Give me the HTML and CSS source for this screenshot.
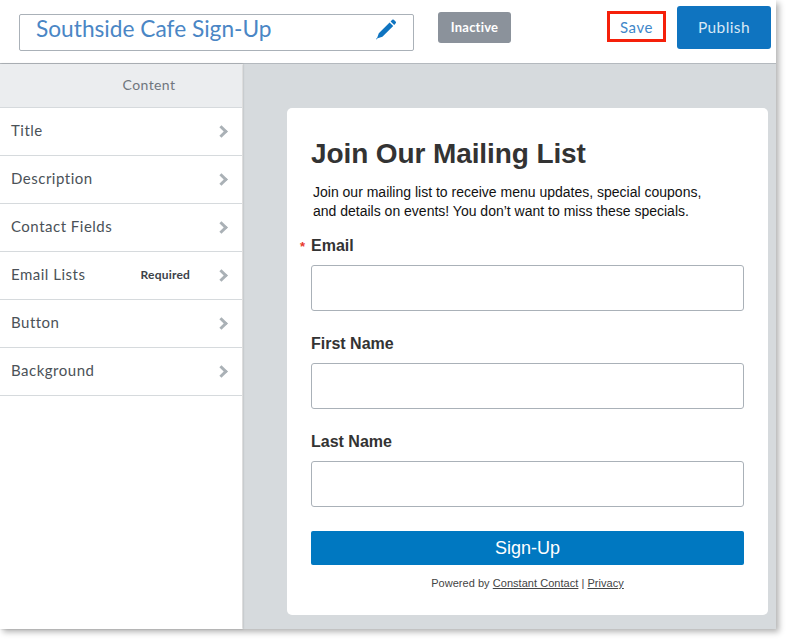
FILE: index.html
```html
<!DOCTYPE html>
<html lang="en">

<head>
    <meta charset="UTF-8">
    <title>Southside Cafe Sign-Up</title>
    <link rel="stylesheet" href="styles.css">
</head>

<body>
    <div class="window">
        <header class="topbar">
            <div class="name-box">
                <span class="name-text">Southside Cafe Sign-Up</span>
                <svg class="pencil" width="22" height="22" viewBox="0 0 22 22">
                    <path d="M14.6 4.4 L18.2 8 L7.4 18.8 L2.6 20.2 L1.4 21.4 L1 21 L2.2 19.8 L3.8 15.2 Z" fill="#0f74c0"/>
                    <path d="M15.6 3.4 L17.2 1.8 Q18 1 18.8 1.8 L20.8 3.8 Q21.4 4.6 20.7 5.3 L19.2 7 Z" fill="#0f74c0"/>
                </svg>
            </div>
            <span class="badge">Inactive</span>
            <a class="save-btn">Save</a>
            <a class="publish-btn">Publish</a>
        </header>

        <div class="main">
            <aside class="sidebar">
                <div class="sidebar-head">Content</div>
                <div class="side-item"><span>Title</span><span class="chevron"></span></div>
                <div class="side-item"><span>Description</span><span class="chevron"></span></div>
                <div class="side-item"><span>Contact Fields</span><span class="chevron"></span></div>
                <div class="side-item"><span>Email Lists</span><span class="req">Required</span><span class="chevron"></span></div>
                <div class="side-item"><span>Button</span><span class="chevron"></span></div>
                <div class="side-item"><span>Background</span><span class="chevron"></span></div>
            </aside>

            <section class="canvas">
                <form class="card">
                    <h1>Join Our Mailing List</h1>
                    <p class="intro">Join our mailing list to receive menu updates, special coupons,<br>and details on events! You don’t want to miss these specials.</p>

                    <label class="field-label"><span class="star">*</span>Email</label>
                    <input class="field" type="text">

                    <label class="field-label">First Name</label>
                    <input class="field" type="text">

                    <label class="field-label">Last Name</label>
                    <input class="field" type="text">

                    <button class="signup" type="button">Sign-Up</button>
                    <p class="powered">Powered by <u>Constant Contact</u> | <u>Privacy</u></p>
                </form>
            </section>
        </div>
    </div>
</body>

</html>
```

FILE: styles.css
```css
html,
body {
    margin: 0;
    padding: 0;
    background: #fff;
}

body {
    width: 786px;
    height: 639px;
    overflow: hidden;
    font-family: "Lato", "Open Sans", sans-serif;
}

.window {
    width: 776px;
    height: 629px;
    display: flex;
    flex-direction: column;
    background: #fff;
    box-shadow: 3px 3px 6px rgba(0, 0, 0, 0.3);
}

.topbar {
    height: 63px;
    display: flex;
    align-items: flex-start;
    border-bottom: 1px solid #b4b9be;
    box-sizing: content-box;
}

.name-box {
    width: 361px;
    height: 27px;
    margin: 14px 0 0 19px;
    padding: 0 16px 8px 16px;
    box-sizing: content-box;
    display: flex;
    align-items: center;
    justify-content: space-between;
    border: 1px solid #aab1b8;
    border-radius: 2px;
}

.name-text {
    font-size: 22.7px;
    color: #4a86c5;
}

.pencil {
    flex: none;
}

.badge {
    width: 73px;
    height: 30px;
    padding-bottom: 1px;
    margin: 12px 0 0 24px;
    display: flex;
    align-items: center;
    justify-content: center;
    background: #8b929b;
    border-radius: 3px;
    color: #fff;
    font-size: 13px;
    font-weight: 700;
    letter-spacing: 0.2px;
}

.save-btn {
    width: 53px;
    height: 25px;
    margin: 11px 0 0 96px;
    display: flex;
    align-items: center;
    justify-content: center;
    border: 3px solid #f5200a;
    color: #3f87c9;
    font-size: 15px;
    letter-spacing: 0.6px;
}

.publish-btn {
    width: 94px;
    height: 41px;
    padding-bottom: 2px;
    margin: 6px 0 0 11px;
    display: flex;
    align-items: center;
    justify-content: center;
    background: #0f74c0;
    border-radius: 3px;
    color: #d8e8f5;
    font-size: 15.5px;
    letter-spacing: 0.4px;
}

.main {
    flex: 1;
    display: flex;
    min-height: 0;
}

.sidebar {
    width: 242px;
    flex: none;
    background: #fff;
    box-shadow: 1px 0 2px rgba(0, 0, 0, 0.2);
    position: relative;
}

.sidebar-head {
    height: 44px;
    padding: 0 0 2px 56px;
    display: flex;
    align-items: center;
    justify-content: center;
    box-sizing: border-box;
    background: #ebedef;
    border-bottom: 1px solid #d6dadd;
    color: #6f767d;
    font-size: 14px;
    letter-spacing: 0.4px;
}

.side-item {
    height: 48px;
    box-sizing: border-box;
    display: flex;
    align-items: center;
    padding: 0 15px 3px 11px;
    border-bottom: 1px solid #d6dadd;
    color: #4b5258;
    font-size: 15px;
    letter-spacing: 0.5px;
}

.req {
    margin-left: auto;
    margin-right: 27px;
    font-size: 12px;
    font-weight: 700;
    letter-spacing: 0.2px;
    color: #3c4248;
}

.chevron {
    width: 9px;
    height: 9px;
    margin-left: auto;
    margin-top: 2px;
    margin-right: 1px;
    box-sizing: border-box;
    border-top: 3px solid #aab1b6;
    border-right: 3px solid #aab1b6;
    transform: rotate(45deg);
}

.req + .chevron {
    margin-left: 0;
}

.canvas {
    flex: 1;
    background: #d6dadd;
    padding: 44px 8px 0 44px;
    box-sizing: border-box;
    margin-left: 1px;
}

.card {
    height: 507px;
    box-sizing: border-box;
    padding: 29px 24px 0;
    background: #fff;
    border-radius: 5px;
    font-family: "Liberation Sans", Arial, sans-serif;
}

.card h1 {
    margin: 0;
    font-size: 28px;
    line-height: 34px;
    font-weight: 700;
    letter-spacing: -0.1px;
    color: #333;
}

.intro {
    margin: 12px 0 0 2px;
    font-size: 14px;
    line-height: 19px;
    color: #111;
}

.field-label {
    display: block;
    position: relative;
    margin-top: 15px;
    font-size: 16px;
    line-height: 20px;
    font-weight: 700;
    color: #333;
}

.star {
    position: absolute;
    left: -11px;
    top: 1px;
    color: #e8392c;
    font-size: 13px;
}

.field {
    display: block;
    width: 100%;
    height: 46px;
    margin: 9px 0 23px;
    box-sizing: border-box;
    border: 1px solid #aab1b8;
    border-radius: 3px;
    background: #fff;
}

.field + .field-label {
    margin-top: 0;
}

.field:last-of-type {
    margin-bottom: 0;
}

.signup {
    display: block;
    width: 100%;
    height: 34px;
    margin-top: 24px;
    border: none;
    border-radius: 2px;
    background: #0078c1;
    color: #fff;
    font-family: "Liberation Sans", Arial, sans-serif;
    font-size: 18px;
}

.powered {
    margin: 11px 0 0;
    text-align: center;
    font-size: 11px;
    line-height: 14px;
    letter-spacing: 0.04px;
    color: #444;
}
```
